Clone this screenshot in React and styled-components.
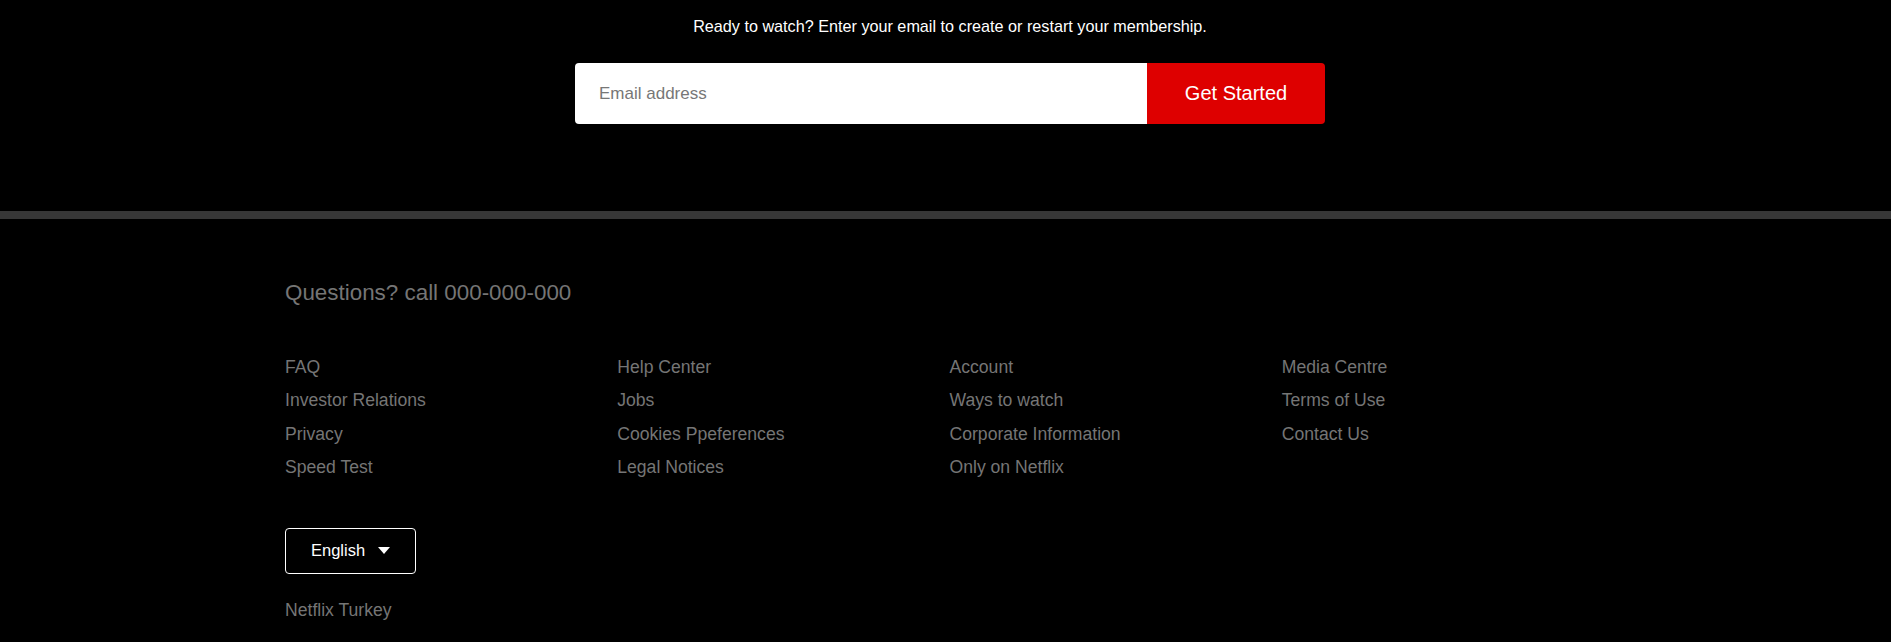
import React from "react";
import styled, { createGlobalStyle } from "styled-components";

const GlobalStyle = createGlobalStyle`
  html, body {
    margin: 0;
    padding: 0;
    background: #000;
  }
  body {
    font-family: "Liberation Sans", Arial, Helvetica, sans-serif;
    color: #fff;
  }
  * { box-sizing: border-box; }
`;

const Page = styled.div`
  background: #000;
  min-height: 642px;
`;

const Signup = styled.section`
  display: flex;
  flex-direction: column;
  align-items: center;
  padding: 16px 0 87px 9px;
`;

const Headline = styled.h3`
  margin: 0;
  font-size: 16.2px;
  line-height: 20px;
  font-weight: 400;
  color: #fff;
`;

const Form = styled.form`
  display: flex;
  width: 750px;
  height: 61px;
  margin-top: 27px;
  border-radius: 4px;
  overflow: hidden;
`;

const EmailInput = styled.input`
  flex: 1;
  min-width: 0;
  border: none;
  outline: none;
  background: #fff;
  padding: 0 24px;
  font-family: inherit;
  font-size: 17px;
  color: #333;
  &::placeholder {
    color: #777;
  }
`;

const StartButton = styled.button`
  width: 178px;
  border: none;
  background: #de0000;
  color: #fff;
  font-family: inherit;
  font-size: 20px;
  cursor: pointer;
`;

const Footer = styled.footer`
  border-top: 8px solid #373737;
  padding: 60px 0 21px;
`;

const FooterInner = styled.div`
  width: 1321px;
  margin: 0 auto;
  display: flex;
  flex-direction: column;
  align-items: flex-start;
`;

const Questions = styled.p`
  margin: 0;
  font-size: 22.4px;
  line-height: 28px;
  color: #757575;
`;

const LinkGrid = styled.ul`
  list-style: none;
  padding: 0;
  margin: 50px 0 0;
  width: 100%;
  display: grid;
  grid-template-columns: repeat(4, 1fr);
  column-gap: 8px;
`;

const LinkColumn = styled.li`
  display: flex;
  flex-direction: column;
  gap: 13.3px;
`;

const FooterLink = styled.a`
  font-size: 17.6px;
  line-height: 20px;
  color: #757575;
  text-decoration: none;
  width: fit-content;
`;

const LangButton = styled.button`
  margin-top: 51px;
  height: 46px;
  display: flex;
  align-items: center;
  gap: 13px;
  padding: 0 25px 0 25px;
  background: #000;
  border: 1px solid #fff;
  border-radius: 4px;
  color: #fff;
  font-family: inherit;
  font-size: 16.5px;
  cursor: pointer;
`;

const Country = styled.p`
  margin: 26px 0 0;
  font-size: 17.6px;
  line-height: 20px;
  color: #757575;
`;

const columns = [
  ["FAQ", "Investor Relations", "Privacy", "Speed Test"],
  ["Help Center", "Jobs", "Cookies Ppeferences", "Legal Notices"],
  ["Account", "Ways to watch", "Corporate Information", "Only on Netflix"],
  ["Media Centre", "Terms of Use", "Contact Us"],
];

export default function App() {
  return (
    <Page>
      <GlobalStyle />
      <Signup>
        <Headline>
          Ready to watch? Enter your email to create or restart your membership.
        </Headline>
        <Form onSubmit={(e) => e.preventDefault()}>
          <EmailInput type="email" placeholder="Email address" />
          <StartButton type="submit">Get Started</StartButton>
        </Form>
      </Signup>
      <Footer>
        <FooterInner>
          <Questions>Questions? call 000-000-000</Questions>
          <LinkGrid>
            {columns.map((col, i) => (
              <LinkColumn key={i}>
                {col.map((label) => (
                  <FooterLink key={label} href="#">
                    {label}
                  </FooterLink>
                ))}
              </LinkColumn>
            ))}
          </LinkGrid>
          <LangButton type="button">
            English
            <svg width="12" height="7" viewBox="0 0 12 7" aria-hidden="true">
              <path d="M0 0 L12 0 L6 7 Z" fill="#fff" />
            </svg>
          </LangButton>
          <Country>Netflix Turkey</Country>
        </FooterInner>
      </Footer>
    </Page>
  );
}
